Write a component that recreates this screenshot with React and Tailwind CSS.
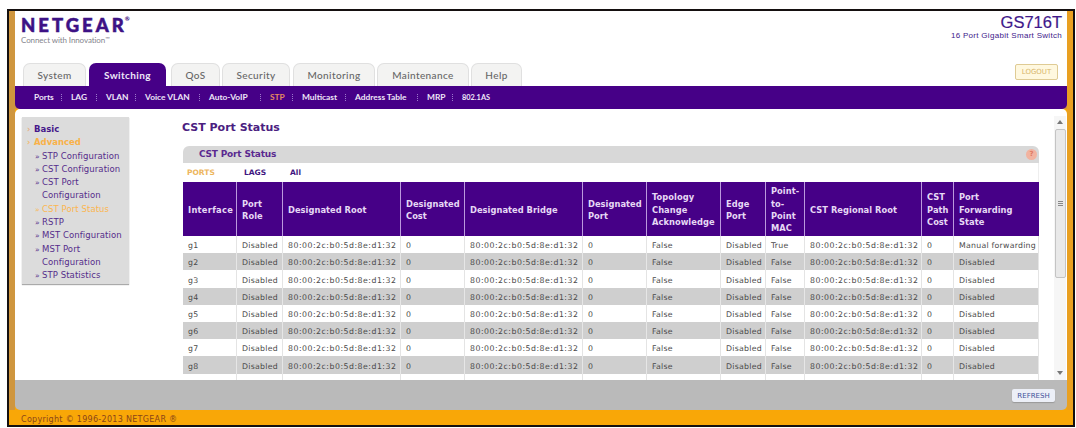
import React from "react";

const COLS = "grid grid-cols-[54px_46px_118px_64px_118px_64px_74px_45px_39px_117px_32px_85px]";
const HEADS = ["Interface", "Port Role", "Designated Root", "Designated Cost", "Designated Bridge", "Designated Port", "Topology Change Acknowledge", "Edge Port", "Point-to-Point MAC", "CST Regional Root", "CST Path Cost", "Port Forwarding State"];
const ID = "80:00:2c:b0:5d:8e:d1:32";
const ROWS = [1, 2, 3, 4, 5, 6, 7, 8].map((n) => [
  "g" + n, "Disabled", ID, "0", ID, "0", "False", "Disabled", n === 1 ? "True" : "False", ID, "0", n === 1 ? "Manual forwarding" : "Disabled",
]);
const TABS = [
  ["System", "w-[63px] mr-[3px]"],
  ["Switching", "w-[77px] mr-[5px]"],
  ["QoS", "w-[49px] mr-[2px]"],
  ["Security", "w-[68px] mr-[3px]"],
  ["Monitoring", "w-[82px] mr-[2px]"],
  ["Maintenance", "w-[92px] mr-[2px]"],
  ["Help", "w-[51px]"],
];
const SUBS = [
  ["Ports", "w-[37px]"], ["LAG", "w-[35px]"], ["VLAN", "w-[39px]"], ["Voice VLAN", "w-[64px]"], ["Auto-VoIP", "w-[61px]"],
  ["STP", "w-[32px]"], ["Multicast", "w-[53px]"], ["Address Table", "w-[72px]"], ["MRP", "w-[35px]"], ["802.1AS", "w-[40px]"],
];
const SIDE = ["STP Configuration", "CST Configuration", "CST Port Configuration", "CST Port Status", "RSTP", "MST Configuration", "MST Port Configuration", "STP Statistics"];

function Header() {
  return (
    <header className="flex h-[75px] shrink-0 flex-col justify-between bg-white">
      <div className="flex justify-between pl-[6px] pr-[5px]">
        <div className="pt-[4px]">
          <div className="font-['Lato'] text-[18.5px] leading-[20px] font-black tracking-[3px] text-[#3d1285] [-webkit-text-stroke:0.5px_#3d1285]">NETGEAR<span className="-ml-[2px] align-top text-[6px] leading-[8px] tracking-normal [-webkit-text-stroke:0]">®</span></div>
          <div className="mt-px font-['Lato'] text-[8px] leading-[9px] tracking-[-0.1px] text-[#85858c]">Connect with Innovation<span className="align-top text-[6px] leading-[6px]">™</span></div>
        </div>
        <div className="pt-[3px] text-right font-['Liberation_Sans'] text-[#40188a]">
          <div className="text-[16.5px] leading-[16px] [-webkit-text-stroke:0.2px_#40188a]">GS716T</div>
          <div className="mt-[1px] text-[8px] leading-[10px] tracking-[0.3px]">16 Port Gigabit Smart Switch</div>
        </div>
      </div>
      <div className="flex items-end justify-between pr-[9px] pl-[8px]">
        <nav className="flex items-end">
          {TABS.map(([t, w]) => (
            <div key={t} className={`flex h-[23px] items-center justify-center rounded-t-[7px] pt-px font-['Lato'] text-[10px] tracking-[0.4px] ${w} ${t === "Switching" ? "bg-[#460087] font-bold text-[#eee8f8]" : "border border-b-0 border-[#e0e0e0] bg-[#f3f3f2] font-medium text-[#666]"}`}>{t}</div>
          ))}
        </nav>
        <button className="mb-[6px] h-[16px] w-[43px] rounded-[2px] border border-[#dfcb94] bg-[#fff8df] font-['DejaVu_Sans'] text-[7px] leading-[15px] text-[#d8b66c]">LOGOUT</button>
      </div>
    </header>
  );
}

function Sidebar() {
  return (
    <aside className="mt-[8px] ml-[7px] h-[167px] w-[107px] shrink-0 bg-[#dcdcdc] pt-[6px] pl-[5px] font-['DejaVu_Sans'] text-[8.5px] leading-[13.3px] text-[#552c8b] shadow-[0_1px_1px_#aaa]">
      <div className="flex font-bold text-[#46188a]"><span className="w-[7px] font-normal text-[#e8a66a]">›</span>Basic</div>
      <div className="flex font-bold text-[#f9b148]"><span className="w-[7px] font-normal">›</span>Advanced</div>
      {SIDE.map((s) => (
        <div key={s} className={`flex pl-[8px] tracking-[0.08px] ${s === "CST Port Status" ? "text-[#fbb650]" : ""}`}>
          <span className="w-[7px] shrink-0 text-[7.5px]">»</span>
          <span className="w-[84px]">{s}</span>
        </div>
      ))}
    </aside>
  );
}

function StatusTable() {
  return (
    <div className="w-[856px] font-['DejaVu_Sans']">
      <div className={`${COLS} h-[54px] bg-[#460087]`}>
        {HEADS.map((h, i) => (
          <div key={h} className={`flex items-center pt-[2px] pl-[5px] text-[8.3px] leading-[12.4px] font-bold text-[#e6d9f5] ${i === 0 ? "tracking-[0.3px]" : "tracking-[0.04px]"} ${i < 11 ? "border-r border-[#bb99dd]" : "pr-[20px]"}`}>{h}</div>
        ))}
      </div>
      {ROWS.map((r, n) => (
        <div key={n} className={`${COLS} h-[17.2px] ${n % 2 ? "bg-[#cfcfcf]" : "bg-white"}`}>
          {r.map((c, i) => (
            <div key={i} className={`border-r pt-[1.3px] pl-[5px] text-[7.8px] leading-[18px] whitespace-nowrap text-[#4a4a4a] ${c === ID ? "tracking-[0.5px]" : "tracking-[0.25px]"} ${n % 2 ? "border-[#e6e6e6]" : "border-[#e4e4e4]"}`}>{c}</div>
          ))}
        </div>
      ))}
      <div className={`${COLS} h-[17px]`}>
        {HEADS.map((h) => <div key={h} className="border-r border-[#e4e4e4]" />)}
      </div>
    </div>
  );
}

export default function App() {
  return (
    <div className="h-[428px] w-[1076px] overflow-hidden bg-white pt-[9px] pl-[7px]">
      <div className="flex h-[418px] w-[1068px] flex-col border-2 border-[#151010] bg-[#f9a707]">
        <div className="flex h-[399px] flex-col border-r-[6px] border-l-[6px] border-l-[#cf963e] border-r-[#e9a021]">
          <Header />
          <div className="h-[23px] shrink-0 bg-[#cf963e]">
            <nav className="flex h-[23px] items-center rounded-b-[5px] bg-[#460087] pl-[19px] font-['Lato'] text-[8.4px] font-bold text-[#eee6f8]">
              {SUBS.map(([s, w], i) => (
                <div key={s} className={`flex shrink-0 items-center whitespace-nowrap ${w} ${s === "802.1AS" ? "text-[7.4px]" : ""}`}>
                  <span className={s === "STP" ? "text-[#e58a61]" : ""}>{s}</span>
                  {i < 9 && <span className="mr-[9px] ml-auto h-[7px] border-l border-dotted border-[#9c78cc]" />}
                </div>
              ))}
            </nav>
          </div>
          <main className="flex h-[271px] shrink-0 overflow-hidden rounded-t-[5px] bg-white">
            <Sidebar />
            <section className="ml-[54px] w-[856px] shrink-0">
              <h1 className="-ml-px pt-[10px] font-['DejaVu_Sans'] text-[11px] leading-[17px] font-bold text-[#4a2080]">CST Port Status</h1>
              <div className="mt-[10px] flex h-[17px] items-center justify-between rounded-t-[6px] bg-[#d8d8d8] pr-[2px] pl-[16px]">
                <h2 className="font-['DejaVu_Sans'] text-[9px] font-bold tracking-[-0.2px] text-[#5a2a90]">CST Port Status</h2>
                <span className="flex size-[11px] items-center justify-center rounded-full bg-[#f2b3a0] font-['DejaVu_Sans'] text-[7px] font-bold text-[#e07862]">?</span>
              </div>
              <div className="flex h-[19px] items-center border-r border-[#eee] pt-px pl-[4px] font-['DejaVu_Sans'] text-[7.5px] font-bold text-[#3f1680]">
                <span className="w-[57px] text-[#edb65d]">PORTS</span>
                <span className="w-[46px]">LAGS</span>
                <span>All</span>
              </div>
              <StatusTable />
            </section>
            <div className="mt-[7px] ml-[15px] flex w-[12px] shrink-0 flex-col items-center bg-[#f6f6f6]">
              <span className="mt-[4px] border-x-[3px] border-b-[4px] border-x-transparent border-b-[#777]" />
              <div className="mt-[5px] flex h-[149px] w-[11px] flex-col items-center justify-center gap-px rounded-[2px] border border-[#c4c4c4] bg-[#e9e9e9]">
                <span className="h-px w-[5px] bg-[#888]" /><span className="h-px w-[5px] bg-[#888]" /><span className="h-px w-[5px] bg-[#888]" />
              </div>
              <span className="mt-auto mb-[5px] border-x-[3px] border-t-[4px] border-x-transparent border-t-[#777]" />
            </div>
          </main>
          <footer className="flex h-[30px] shrink-0 items-center justify-end rounded-b-[5px] bg-[#bababa] pr-[12px]">
            <button className="h-[13px] w-[43px] rounded-[2px] bg-[#eceff7] font-['DejaVu_Sans'] text-[7px] leading-[14px] text-[#40529a] shadow-[0_1px_1px_#999]">REFRESH</button>
          </footer>
        </div>
        <div className="pt-[2px] pl-[12px] font-['DejaVu_Sans'] text-[8px] leading-[16px] tracking-[0.3px] text-[#8b4518]">Copyright © 1996-2013 NETGEAR ®</div>
      </div>
    </div>
  );
}
